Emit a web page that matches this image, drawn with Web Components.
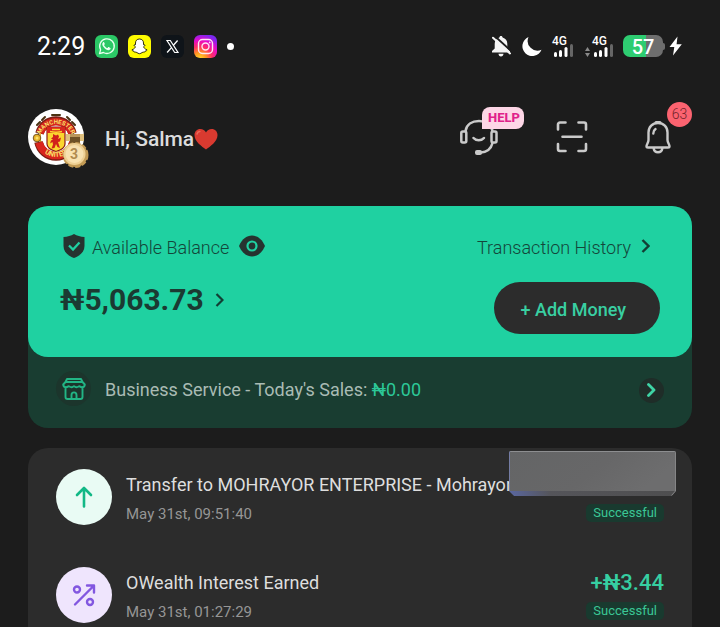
<!DOCTYPE html>
<html lang="en">
<head>
<meta charset="utf-8">
<meta name="viewport" content="width=device-width, initial-scale=1">
<title>Wallet home</title>
<style>
  body { margin: 0; background: #1c1c1c; color: #dcdcdc; font-family: Roboto, "Noto Sans", sans-serif; }
</style>
</head>
<body>
<wallet-page></wallet-page>
<script>
const base = `
  *, *::before, *::after { box-sizing: border-box; }
  svg { display: block; flex: none; }
  button { font: inherit; color: inherit; background: none; border: 0; padding: 0; margin: 0; cursor: pointer; }
  a { color: inherit; text-decoration: none; }
`;
function define(name, css, html) {
  const t = document.createElement('template');
  t.innerHTML = `<style>${base}${css}</style>${html}`;
  customElements.define(name, class extends HTMLElement {
    constructor() {
      super();
      this.attachShadow({ mode: 'open' }).append(t.content.cloneNode(true));
    }
  });
}

/* Mobile signal meter; the "data" attribute shows the transfer arrows */
define('signal-meter', `
  :host { display: grid; justify-items: end; color: #fff; }
  :host([data]) { margin-left: 2px; }
  span { font-size: 12px; line-height: 12px; font-weight: 500; width: 21px; }
  .arrows { display: none; }
  :host([data]) .arrows { display: block; }
  .m { display: flex; gap: 2px; align-items: center; }
`, `
  <span>4G</span>
  <div class="m">
    <svg class="arrows" width="5" height="10" viewBox="0 0 5 10" fill="#8a8a8a"><path d="M0 4 2.500 0 5 4zM0 6h5L2.500 10z"/></svg>
    <svg width="21" height="11" viewBox="0 0 21 11" fill="#fff" overflow="visible"><rect x="2" y="5" width="3" height="5" rx="1.500"/><rect x="7" y="3" width="3" height="7" rx="1.500"/><rect x="12.500" y="0" width="3" height="10" rx="1.500"/><rect x="18" y="-3" width="3" height="13" rx="1.500" fill="#666"/></svg>
  </div>
`);

define('battery-level', `
  :host { display: flex; align-items: center; color: #fff; }
  .body { width: 40px; height: 22px; border-radius: 7px; background: linear-gradient(90deg, #2ecc71 57%, #6e6e6e 57%); text-align: center; font-size: 20px; line-height: 24px; font-weight: 500; }
  .nub { width: 2px; height: 7px; border-radius: 0 2px 2px 0; background: #6e6e6e; }
  svg { margin-left: 4px; }
`, `
  <div class="body">57</div><div class="nub"></div>
  <svg width="13" height="20" viewBox="0 0 13 20"><path d="M8.500.5.500 11h4.800L4 19.500 12.800 8.300H7.600z" fill="#fff"/></svg>
`);

define('status-bar', `
  :host { display: flex; justify-content: space-between; align-items: center; height: 92px; padding: 0 38px 0 37px; color: #fff; }
  .side { display: flex; align-items: center; gap: 10px; }
  time { font-size: 25px; line-height: 28px; padding-top: 1px; }
  .dot { width: 7px; height: 7px; border-radius: 50%; background: #fff; }
`, `
  <div class="side">
    <time>2:29</time>
    <svg width="23" height="23" viewBox="0 0 23 23"><rect width="23" height="23" rx="6" fill="#2bc866"/><path d="M4.500 18.600l1.100-3.900a7.300 7.300 0 1 1 2.800 2.800z" fill="none" stroke="#e9fff0" stroke-width="1.300" stroke-linejoin="round"/><path d="M9.200 7.600c-.3-.6-.8-.6-1.200-.2-1 1-.9 2.300-.2 3.500 1.200 2 2.700 3.300 4.700 4.100 1.300.5 2.500.1 3-.9.300-.6.200-1-.2-1.200l-1.500-.8c-.4-.2-.7 0-.9.300-.5.700-.7.800-1.200.5-1-.5-1.900-1.300-2.500-2.300-.2-.4-.1-.6.2-.9.400-.4.500-.7.300-1.100z" fill="#e9fff0"/></svg>
    <svg width="23" height="23" viewBox="0 0 23 23"><rect width="23" height="23" rx="6" fill="#fffc00"/><path d="M11.500 4c-2.600 0-4 1.800-4 4v1.700c-.5.200-1.200-.2-1.500.3-.3.700.9 1.100 1.300 1.600.3.700-1.400 2.700-3.300 3.200-.2.800 1 1.100 1.900 1.300.2.300.1.900.5 1 .8.100 1.500-.2 2.500.4.700.5 1.500 1.200 2.600 1.200s1.900-.7 2.600-1.200c1-.6 1.700-.3 2.500-.4.400-.1.300-.7.500-1 .9-.2 2.100-.5 1.900-1.300-1.900-.5-3.600-2.500-3.300-3.200.4-.5 1.600-.9 1.300-1.600-.3-.5-1-.1-1.500-.3V8c0-2.200-1.400-4-4-4z" fill="#fff" stroke="#1a1a00" stroke-width=".9" stroke-linejoin="round"/></svg>
    <svg width="23" height="23" viewBox="0 0 23 23"><rect width="23" height="23" rx="6" fill="#0f1419"/><path d="M6 5.500h3.300l7.700 12h-3.300z" fill="none" stroke="#fff" stroke-width="1.200"/><path d="M16.600 5.500l-4.400 5M10.500 12.600l-4.400 4.900" stroke="#fff" stroke-width="1.300"/></svg>
    <svg width="23" height="23" viewBox="0 0 23 23"><defs><radialGradient id="ig" cx=".25" cy="1.050" r="1.100"><stop offset="0" stop-color="#ffdd33"/><stop offset=".25" stop-color="#ff9a1f"/><stop offset=".5" stop-color="#ff2d68"/><stop offset=".75" stop-color="#e60acb"/><stop offset="1" stop-color="#7a28f0"/></radialGradient></defs><rect width="23" height="23" rx="6" fill="url(#ig)"/><g fill="none" stroke="#ffe6f4" stroke-width="1.400"><rect x="4.500" y="4.500" width="14" height="14" rx="4"/><circle cx="11.500" cy="11.500" r="3.500"/></g><circle cx="15.700" cy="7.400" r=".9" fill="#ffe6f4"/></svg>
    <span class="dot"></span>
  </div>
  <div class="side">
    <svg width="19" height="22" viewBox="1 0 19 22"><path d="M10 1c1 0 1.500.7 1.600 1.500 3 .8 4.700 3.200 4.700 6.300v4.600L19 16v1.500H1V16l2.700-2.600V8.800c0-3.100 1.800-5.500 4.700-6.300C8.500 1.700 9 1 10 1zM7.500 18.800h5C12.500 20.300 11.400 21.500 10 21.500s-2.500-1.200-2.500-2.700z" fill="#f4f4f4"/><path d="M3.200.6 21 16.800" stroke="#1c1c1c" stroke-width="2"/><path d="M2 2.800 19 18.400" stroke="#f4f4f4" stroke-width="2" stroke-linecap="round"/></svg>
    <svg width="21" height="21" viewBox="0 0 21 21"><path d="M7.500 1A9.900 9.900 0 1 0 20.500 13.800 9.800 9.800 0 0 1 7.500 1z" fill="#fff"/></svg>
    <signal-meter></signal-meter>
    <signal-meter data></signal-meter>
    <battery-level></battery-level>
  </div>
`);

define('club-avatar', `
  :host { display: block; position: relative; width: 56px; height: 56px; }
  .medal { position: absolute; left: 34px; top: 25px; }
  text { font-family: Roboto, sans-serif; font-weight: 700; }
`, `
  <svg width="56" height="56" viewBox="0 0 56 56" role="img" aria-label="Profile picture">
    <defs><path id="up" d="M12 26.500A16.800 16.800 0 0 1 44 26.500"/><path id="down" d="M10 35A19 19 0 0 0 46 35"/></defs>
    <circle cx="28" cy="28" r="28" fill="#fff"/>
    <circle cx="28" cy="28" r="18" fill="#fff" stroke="#4a3212" stroke-width="1"/>
    <circle cx="28" cy="28" r="16" fill="none" stroke="#e6b534" stroke-width="1.500"/>
    <path d="M17 8l-3 3M39 8l3 3M12 13l-3 3M44 13l3 3M24 6h8" stroke="#4a3212" stroke-width="2" stroke-linecap="round"/>
    <path d="M11.500 24.500A17 17 0 0 1 44.500 24.500" fill="none" stroke="#7b1e13" stroke-width="8.500"/>
    <path d="M12 24A17 17 0 0 1 44 24" fill="none" stroke="#d4261e" stroke-width="7.500"/>
    <path d="M10.500 33A17.800 17.800 0 0 0 45.500 33" fill="none" stroke="#7b1e13" stroke-width="8.500"/>
    <path d="M11 33.500A17.600 17.600 0 0 0 45 33.500" fill="none" stroke="#d9251d" stroke-width="7.500"/>
    <circle cx="9" cy="29" r="3.800" fill="#e8b52c" stroke="#5b3b10" stroke-width=".8"/><circle cx="9" cy="29" r="1.500" fill="#fbe26b"/>
    <path d="M19 18h18v17c0 4-4 6-9 7.500-5-1.500-9-3.500-9-7.500z" fill="#fbd52f" stroke="#8b1b14" stroke-width="1.200"/>
    <path d="M19 18h18v6H19z" fill="#d8261d"/><path d="M22 22.500c4 1 8 1 12 0M24 20.500h8" stroke="#fbd52f" stroke-width="1.300" fill="none"/>
    <path d="M25 25l3 1.500 2-1 1 2-1 2.500 3-1.500-1 4-2 .5 2 6-2.500-1-1.500-3-1.500 4-3 .5 1.500-4-.5-2.500-2.500 1.500 1-3 2-1-2-1 2-1.500z" fill="#d1201b"/>
    <text font-size="6" fill="#fbe168"><textPath href="#up" startOffset="50%" text-anchor="middle">MANCHESTER</textPath></text>
    <text font-size="7" fill="#fbe168"><textPath href="#down" startOffset="50%" text-anchor="middle">UNITED</textPath></text>
  </svg>
  <svg class="medal" width="27" height="35" viewBox="0 0 27 35">
    <path d="M4 0h18v7H4z" fill="#b9965a"/><path d="M8 3h10v7H8z" fill="#6e5226"/><path d="M4 0h4v7H4zM18 0h4v7h-4z" fill="#dfc07d"/>
    <circle cx="13.500" cy="21" r="12" fill="#c39b55" stroke="#c39b55" stroke-width="2" stroke-dasharray="5 2"/>
    <circle cx="12.500" cy="20" r="11" fill="#eed093"/><circle cx="12.500" cy="20" r="9" fill="#f8e2b0"/>
    <text x="12" y="25" font-size="14" text-anchor="middle" fill="#b08b4e">3</text>
  </svg>
`);

define('profile-header', `
  :host { display: flex; align-items: center; padding: 17px 49px 41px 28px; }
  h1 { flex: 1; display: flex; align-items: center; margin: 0 0 0 21px; padding-top: 3px; font-size: 21px; line-height: 28px; font-weight: 500; }
  nav { display: flex; align-items: center; gap: 57px; }
  button { position: relative; display: grid; place-items: center; }
  .help { position: absolute; left: 23px; top: -12px; width: 42px; height: 22px; padding-left: 2px; border-radius: 8px 8px 8px 0; background: #fdd6e6; color: #e0218a; font-size: 13px; line-height: 22px; font-weight: 800; }
  .count { position: absolute; left: 22px; top: -18px; width: 25px; height: 25px; border-radius: 50%; background: #fb6370; color: #6f2229; font-size: 14px; line-height: 25px; font-weight: 300; }
`, `
  <club-avatar></club-avatar>
  <h1>Hi, Salma<svg width="24" height="22" viewBox="0 0 24 22" role="img" aria-label="heart"><path d="M12 21.500C8 18.500.5 13.500.5 7.200.5 3.500 3 1 6.300 1 8.800 1 11 2.300 12 4.600 13 2.300 15.200 1 17.700 1 21 1 23.500 3.500 23.500 7.200 23.500 13.500 16 18.500 12 21.500z" fill="#d93a30"/><path d="M3 6c.4-1.500 1.500-2.300 2.800-2.400" stroke="#e96a5c" stroke-width="1.500" fill="none" stroke-linecap="round"/></svg></h1>
  <nav>
    <button aria-label="Support">
      <svg width="40" height="36" viewBox="0 0 40 36" fill="none" stroke="#cacaca" stroke-width="2.500"><rect x="2.300" y="12.500" width="5" height="11" rx="1.500"/><rect x="32.500" y="12.500" width="5" height="11" rx="1.500"/><path d="M6.500 12C7.500 5.500 13 2 20 2s12.500 3.500 13.500 10M33.500 24C32 30 28 33 22 33.500"/><path d="M14.500 19c2.500 3 8 3 10.500 0" stroke-linecap="round"/><rect x="17" y="32" width="5" height="3" rx="1" fill="#cacaca" stroke-width="2"/></svg>
      <span class="help">HELP</span>
    </button>
    <button aria-label="Scan">
      <svg width="32" height="34" viewBox="0 0 32 34" fill="none" stroke="#cacaca" stroke-width="2.600" stroke-linecap="round"><path d="M2 9.500V4.500a2 2 0 0 1 2-2h5.500M22.500 2.500H28a2 2 0 0 1 2 2v5M30 24v5a2 2 0 0 1-2 2h-5.500M9.500 31H4a2 2 0 0 1-2-2v-5M6.500 16.700h19"/></svg>
    </button>
    <button aria-label="Notifications">
      <svg width="26" height="34" viewBox="0 0 26 34" fill="none" stroke="#cacaca" stroke-width="2.400" stroke-linejoin="round"><path d="M13 3c5.500 0 9.500 4 9.500 9.500V20c0 2.500 2 4.500 2 6.200 0 .8-.5 1.300-1.500 1.300H3c-1 0-1.500-.5-1.500-1.300 0-1.700 2-3.700 2-6.200v-7.500C3.500 7 7.500 3 13 3zM8.500 28c.5 2.700 2.200 4.300 4.500 4.300s4-1.600 4.500-4.300"/><path d="M11 2.500h4" stroke-linecap="round" stroke-width="3"/><path d="M8.300 13.500c0-2 .8-3.500 2.200-4.400" stroke-linecap="round"/></svg>
      <span class="count">63</span>
    </button>
  </nav>
`);

define('balance-card', `
  :host { display: block; border-radius: 20px; background: #1fd1a1; color: #14463a; padding: 24px 32px 23px; }
  .row { display: flex; justify-content: space-between; }
  .top { height: 32px; align-items: center; margin-bottom: 20px; font-size: 18px; font-weight: 300; }
  .label, .history { display: flex; align-items: center; }
  .label { gap: 7px; padding-left: 3px; }
  .label span, .history span { padding-top: 2px; }
  .label button { padding-left: 3px; }
  .history { gap: 10px; padding-right: 10px; }
  .balance { display: flex; align-items: center; gap: 11px; height: 35px; font-size: 30px; line-height: 36px; font-weight: 700; color: #1b3a32; }
  .add { height: 52px; padding: 2px 34px 0 27px; border-radius: 26px; background: #2c2c2c; color: #39cfa2; font-size: 18px; font-weight: 500; }
`, `
  <div class="row top">
    <div class="label">
      <svg width="22" height="24" viewBox="0 0 22 24"><path d="M11 0c3 1.800 6.500 2.700 10.500 3v9c0 5.500-4 9.500-10.500 12C4.500 21.500.5 17.500.5 12V3C4.500 2.700 8 1.800 11 0z" fill="#26332f"/><path d="M6 11.500l4 4 6.500-7" fill="none" stroke="#1fd1a1" stroke-width="2.300"/></svg>
      <span>Available Balance</span>
      <button aria-label="Hide balance"><svg width="26" height="22" viewBox="0 0 26 22"><path d="M0 11C3 4 7.500.5 13 .5S23 4 26 11c-3 7-7.500 10.500-13 10.500S3 18 0 11z" fill="#26332f"/><circle cx="13" cy="11" r="4.500" fill="none" stroke="#1fd1a1" stroke-width="2.200"/></svg></button>
    </div>
    <a class="history" href="#history"><span>Transaction History</span><svg width="9" height="14" viewBox="0 0 9 14"><path d="M1.500 1 7.500 7l-6 6" fill="none" stroke="#123f34" stroke-width="2.400"/></svg></a>
  </div>
  <div class="row">
    <a class="balance" href="#balance">₦5,063.73<svg width="9" height="14" viewBox="0 0 9 14"><path d="M1.500 1 7.500 7l-6 6" fill="none" stroke="#123f34" stroke-width="2.200"/></svg></a>
    <button class="add">+ Add Money</button>
  </div>
`);

define('business-strip', `
  :host { display: block; }
  a { display: flex; align-items: center; gap: 14px; padding: 14px 28px 22px; font-size: 18px; line-height: 32px; color: #a9bbb4; }
  .shop { display: grid; place-items: center; width: 35px; height: 35px; border-radius: 50%; background: #1c352c; }
  .text { flex: 1; padding-top: 2px; }
  b { font-weight: 400; color: #2cc898; }
  .go { display: grid; place-items: center; width: 25px; height: 25px; margin-top: 3px; border-radius: 50%; background: #1f2d28; }
`, `
  <a href="#business">
    <span class="shop"><svg width="24" height="22" viewBox="0 0 24 22" fill="none" stroke="#22b585" stroke-width="1.900" stroke-linejoin="round"><path d="M5 1h14l1.500 3h-17zM3.500 4 1.200 6.500c0 1.800 1 2.700 2.800 2.700 1.500 0 2.500-1 2.700-1 .5 0 1.300 1 2.700 1 1.300 0 2.200-1 2.600-1s1.300 1 2.600 1c1.400 0 2.200-1 2.700-1 .2 0 1.200 1 2.700 1 1.800 0 2.800-.9 2.800-2.700L20.500 4M3.500 9.500V19c0 1.300.7 2 2 2h13c1.300 0 2-.7 2-2V9.500M9.500 21v-4c0-3.500 5-3.500 5 0v4"/></svg></span>
    <span class="text">Business Service - Today's Sales: <b>₦0.00</b></span>
    <span class="go"><svg width="9" height="14" viewBox="0 0 9 14"><path d="M1.500 1.500 7 7l-5.500 5.500" fill="none" stroke="#3fd3a5" stroke-width="2.800" stroke-linecap="round" stroke-linejoin="round"/></svg></span>
  </a>
`);

define('transaction-row', `
  :host { display: block; position: relative; }
  a { display: grid; grid-template-columns: 56px 1fr auto; gap: 14px; }
  .icon { display: grid; place-items: center; height: 56px; border-radius: 50%; background: var(--tint); }
  .title { font-size: 18px; line-height: 32px; white-space: nowrap; color: #dedede; }
  .date { font-size: 15px; line-height: 26px; color: #969696; }
  .end { display: grid; grid-template-rows: 35px 18px; justify-items: end; }
  .amount { font-size: 22px; line-height: 32px; font-weight: 500; color: #36cfa2; }
  .state { padding: 0 7px; border-radius: 5px; background: #193a2f; color: #3bc796; font-size: 13px; line-height: 18px; }
  .main { min-width: 0; }
`, `
  <a href="#transaction">
    <span class="icon"><slot name="icon"></slot></span>
    <div class="main"><div class="title"><slot name="title"></slot></div><div class="date"><slot name="date"></slot></div></div>
    <div class="end"><span class="amount"><slot name="amount"></slot></span><span class="state"><slot name="state"></slot></span></div>
  </a>
  <slot name="cover"></slot>
`);

/* Frosted plate that hides an amount */
define('privacy-plate', `
  :host { position: absolute; right: -12px; top: -18px; width: 167px; height: 45px; border-radius: 2px 2px 5px 5px; overflow: hidden; }
  svg { width: 100%; height: 100%; }
`, `
  <svg viewBox="0 0 167 45"><defs><linearGradient id="g" x2="1"><stop offset="0" stop-color="#5a67a0"/><stop offset=".25" stop-color="#55555a"/><stop offset="1" stop-color="#4e4e4f"/></linearGradient><linearGradient id="f" x2="1" y2=".3"><stop offset="0" stop-color="#646566"/><stop offset=".6" stop-color="#676768"/><stop offset="1" stop-color="#6d6d6e"/></linearGradient></defs><path d="M0 0h167v40l-4 5H5l-5-5z" fill="url(#g)"/><path d="M1 1h165v39H1z" fill="url(#f)"/><path d="M0 .5h167" stroke="#8d8e90"/><path d="M.5 1v39" stroke="#747ca3"/><path d="M166.500 1v39l-4 4.500" fill="none" stroke="#858586"/></svg>
`);

define('wallet-page', `
  :host { display: block; overflow-x: clip; }
  .wallet { margin: 0 28px 20px; border-radius: 20px; background: #193d31; }
  .list { display: flex; flex-direction: column; gap: 40px; margin: 0 28px; padding: 21px 28px 42px; border-radius: 20px 20px 0 0; background: #2c2c2c; }
`, `
  <status-bar></status-bar>
  <profile-header></profile-header>
  <section class="wallet"><balance-card></balance-card><business-strip></business-strip></section>
  <section class="list">
    <transaction-row style="--tint:#e9fbf4">
      <svg slot="icon" width="18" height="22" viewBox="0 0 18 22" fill="none" stroke="#12b886" stroke-width="2.600" stroke-linecap="round" stroke-linejoin="round"><path d="M9 20.500V2M2 9l7-7 7 7"/></svg>
      <span slot="title">Transfer to MOHRAYOR ENTERPRISE - Mohrayor</span>
      <span slot="date">May 31st, 09:51:40</span>
      <span slot="state">Successful</span>
      <privacy-plate slot="cover"></privacy-plate>
    </transaction-row>
    <transaction-row style="--tint:#efe5fd">
      <svg slot="icon" width="24" height="24" viewBox="0 0 24 24" fill="none" stroke="#8257e0" stroke-width="2.400" stroke-linecap="round" stroke-linejoin="round"><circle cx="5" cy="6.500" r="3"/><circle cx="18" cy="19" r="3"/><path d="M3 21.500 21.500 3M15 2.500h7v7"/></svg>
      <span slot="title">OWealth Interest Earned</span>
      <span slot="date">May 31st, 01:27:29</span>
      <span slot="amount">+₦3.44</span>
      <span slot="state">Successful</span>
    </transaction-row>
  </section>
`);
</script>
</body>
</html>
